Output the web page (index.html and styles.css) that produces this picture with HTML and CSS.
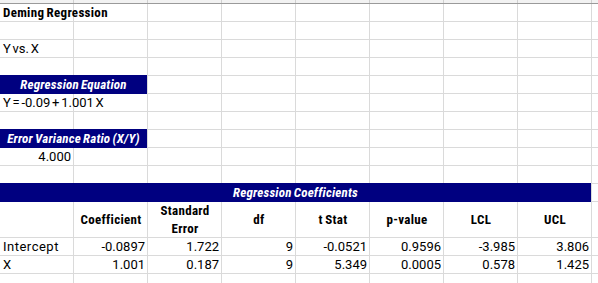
FILE: index.html
```html
<!DOCTYPE html>
<html>
<head>
<meta charset="utf-8">
<link rel="stylesheet" href="styles.css">
</head>
<body>
<div class="sheet">
  <div class="colhead"></div>
  <div class="row"><div class="c a b">Deming Regression</div></div>
  <div class="row"></div>
  <div class="row"><div class="c a">Y vs. X</div></div>
  <div class="row"></div>
  <div class="row"><div class="c band span2">Regression Equation</div></div>
  <div class="row"><div class="c a wide">Y = -0.09 + 1.001 X</div></div>
  <div class="row"></div>
  <div class="row"><div class="c band span2">Error Variance Ratio (X/Y)</div></div>
  <div class="row"><div class="c a num">4.000</div></div>
  <div class="row"></div>
  <div class="row"><div class="c band span8">Regression Coefficients</div></div>
  <div class="row tall">
    <div class="c"></div>
    <div class="c hd">Coefficient</div>
    <div class="c hd">Standard Error</div>
    <div class="c hd">df</div>
    <div class="c hd">t Stat</div>
    <div class="c hd">p-value</div>
    <div class="c hd">LCL</div>
    <div class="c hd">UCL</div>
  </div>
  <div class="row">
    <div class="c lbl">Intercept</div>
    <div class="c num">-0.0897</div>
    <div class="c num">1.722</div>
    <div class="c num">9</div>
    <div class="c num">-0.0521</div>
    <div class="c num">0.9596</div>
    <div class="c num">-3.985</div>
    <div class="c num">3.806</div>
  </div>
  <div class="row">
    <div class="c lbl">X</div>
    <div class="c num">1.001</div>
    <div class="c num">0.187</div>
    <div class="c num">9</div>
    <div class="c num">5.349</div>
    <div class="c num">0.0005</div>
    <div class="c num">0.578</div>
    <div class="c num">1.425</div>
  </div>
  <div class="row"></div>
</div>
</body>
</html>
```
FILE: styles.css
```css
html, body {
  margin: 0;
  padding: 0;
  background: #fff;
}
.sheet {
  width: 598px;
  height: 283px;
  overflow: hidden;
  font-family: Roboto, "Liberation Sans", Arial, sans-serif;
  font-size: 13px;
  word-spacing: -1.5px;
  color: #000;
}
.colhead {
  height: 4px;
  box-sizing: border-box;
  border-bottom: 1px solid #9a9a9a;
  background: repeating-linear-gradient(to right, #f2f2f2 0 73px, #d0d0d0 73px 74px);
}
.row {
  display: grid;
  grid-template-columns: repeat(8, 74px) 1fr;
  height: 18px;
  box-sizing: border-box;
  border-bottom: 1px solid #dadada;
  background: repeating-linear-gradient(to right, transparent 0 73px, #dadada 73px 74px);
}
.row.tall {
  height: 36px;
}
.c {
  line-height: 17px;
  padding: 0 3px;
  white-space: nowrap;
  min-width: 0;
}
.a { grid-column: 1; }
.wide { grid-column: 1 / span 2; }
.lbl { letter-spacing: 0.5px; }
.b {
  font-weight: bold;
  font-stretch: condensed;
  letter-spacing: 0.3px;
  word-spacing: -1px;
}
.num {
  text-align: right;
  padding-left: 0;
  padding-right: 2px;
  margin-right: 1px;
}
.band {
  background: #000080;
  color: #fff;
  font-weight: bold;
  font-style: italic;
  font-stretch: condensed;
  letter-spacing: 0.2px;
  word-spacing: -1px;
  text-align: center;
  box-shadow: 0 -1px 0 #000080, 0 1px 0 #000080;
  margin-right: 1px;
  padding: 0;
}
.span2 { grid-column: 1 / span 2; }
.span8 { grid-column: 1 / span 8; }
.hd {
  font-weight: bold;
  font-stretch: condensed;
  letter-spacing: 0.3px;
  word-spacing: -1px;
  text-align: center;
  white-space: normal;
  display: flex;
  align-items: center;
  justify-content: center;
  line-height: 18px;
  padding: 0 4px;
}
```
